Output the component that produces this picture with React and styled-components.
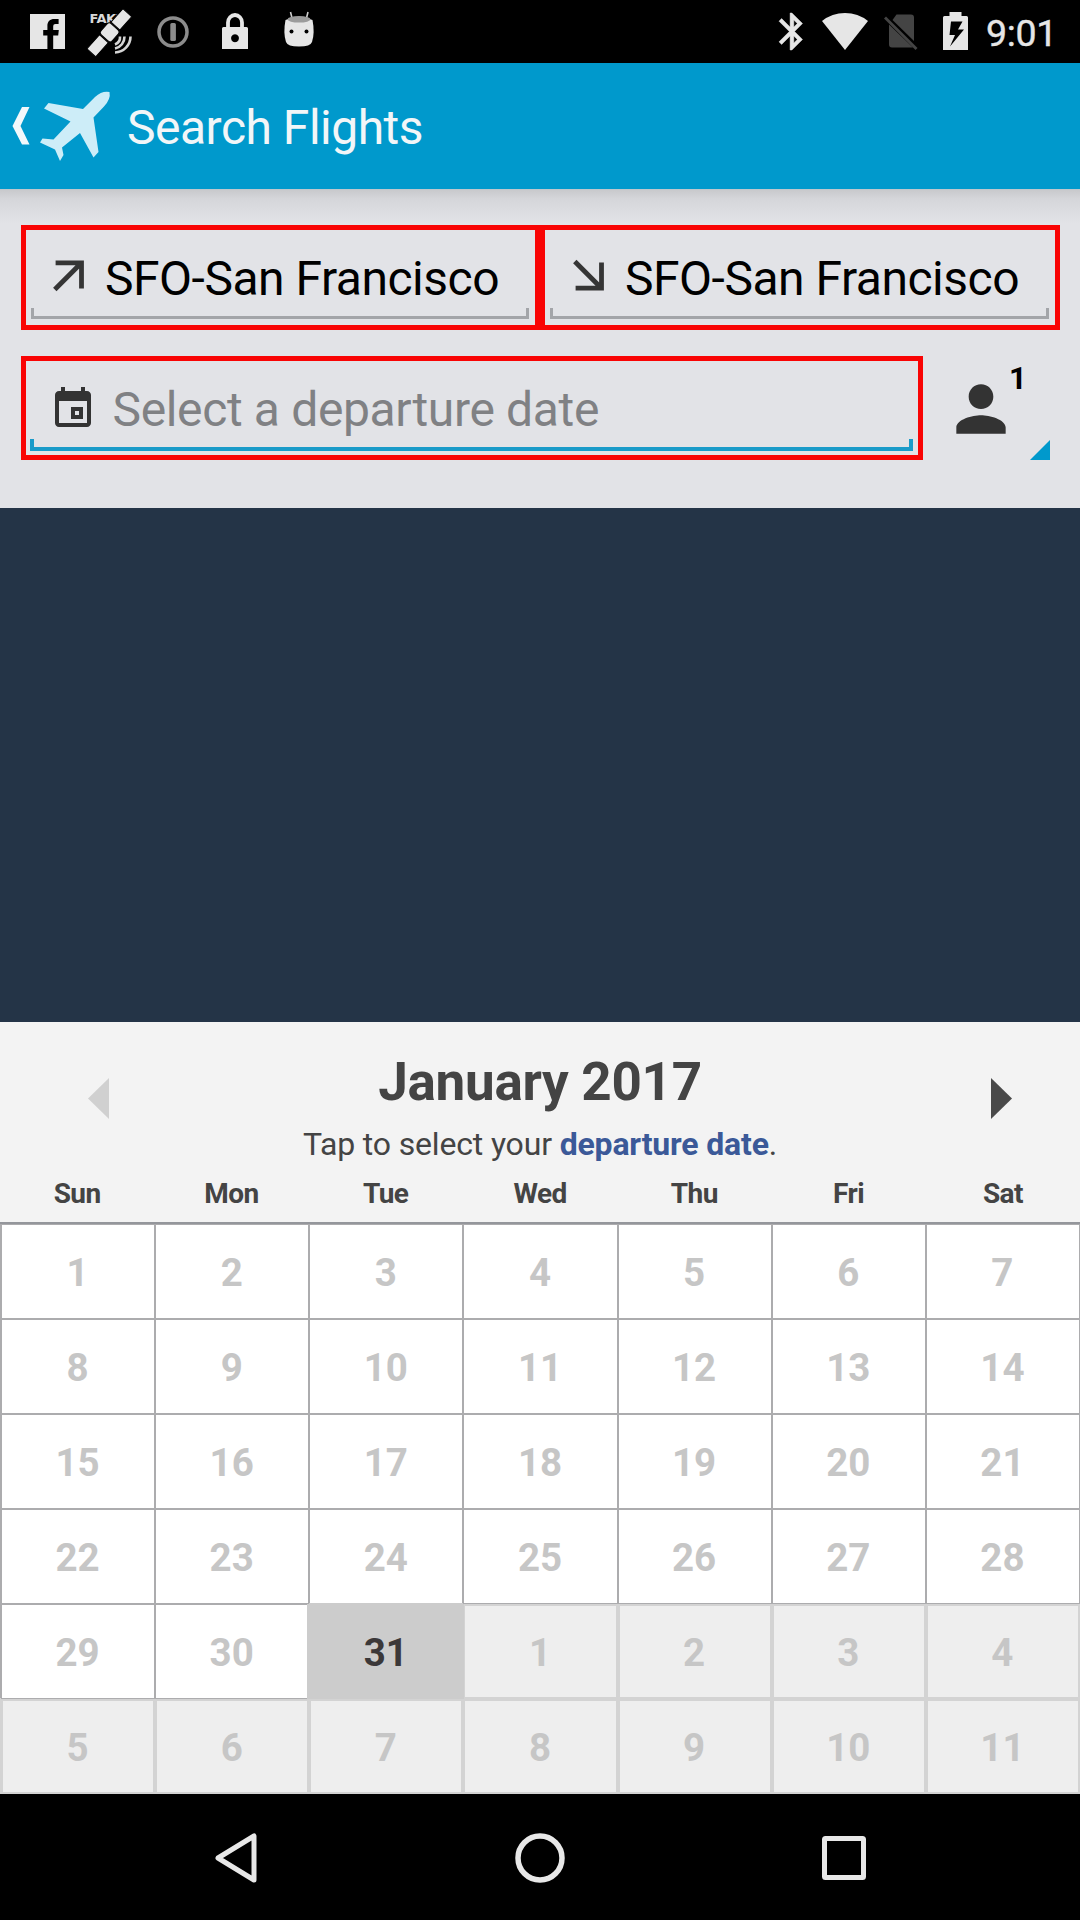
import React from "react";
import styled, { createGlobalStyle } from "styled-components";

const GlobalStyle = createGlobalStyle`
  * { box-sizing: border-box; }
  body { margin: 0; background: #000; font-family: Roboto, "Liberation Sans", sans-serif; }
  svg { display: block; flex: none; overflow: visible; }
`;

const Screen = styled.div`
  width: 1080px;
  height: 1920px;
  display: flex;
  flex-direction: column;
  overflow: hidden;
`;

const StatusBar = styled.div`
  height: 63px;
  flex: none;
  background: #000;
  display: flex;
  justify-content: space-between;
  padding: 0 23px 0 30px;
`;

const StatusGroup = styled.div`
  display: flex;
  height: 63px;
  align-items: flex-start;
`;

const StatusIcon = styled.div`
  margin-left: ${(p) => p.$gap || 0}px;
  padding-top: ${(p) => p.$top}px;
`;

const Clock = styled.span`
  margin-left: 18px;
  padding-top: 11px;
  font-size: 37.5px;
  line-height: 44px;
  letter-spacing: -0.3px;
  color: #e6e6e6;
  -webkit-text-stroke: 0.4px #e6e6e6;
`;

const ActionBar = styled.header`
  height: 126px;
  flex: none;
  background: #0099cc;
  display: flex;
  align-items: center;
  padding-left: 12px;
`;

const BarTitle = styled.h1`
  margin: 3px 0 0 17px;
  font-size: 48px;
  line-height: 56px;
  font-weight: 400;
  letter-spacing: -0.5px;
  color: #f2f6f8;
`;

const SearchPanel = styled.section`
  height: 319px;
  flex: none;
  padding: 36px 20px 0 21px;
  background: linear-gradient(#b9c6cd 0, #c9cacd 1.5px, #d5d6da 10px, #e2e3e7 34px);
`;

const FieldRow = styled.div`
  display: flex;
  margin-bottom: 26px;
`;

const Field = styled.div`
  width: ${(p) => p.$width}px;
  height: ${(p) => p.$height}px;
  flex: none;
  border: 5px solid #f90404;
  padding: ${(p) => p.$pad};
  display: flex;
`;

const FieldInner = styled.div`
  flex: 1;
  display: flex;
  align-items: flex-start;
  border: solid ${(p) => (p.$active ? "#1a9bc9" : "#a3a5a9")};
  border-width: 0 ${(p) => (p.$active ? "4px 4px" : "3px 3px")};
  border-image: linear-gradient(
      to top,
      ${(p) => (p.$active ? "#1a9bc9 12px, transparent 12px" : "#a3a5a9 11px, transparent 11px")}
    ) ${(p) => (p.$active ? 4 : 3)};
`;

const FieldIcon = styled.div`
  padding-top: ${(p) => p.$top}px;
  padding-left: ${(p) => p.$left}px;
`;

const FieldText = styled.span`
  padding-top: 21px;
  margin-left: ${(p) => p.$left}px;
  font-size: 48px;
  line-height: 56px;
  white-space: nowrap;
  letter-spacing: ${(p) => (p.$hint ? -0.35 : -0.48)}px;
  color: ${(p) => (p.$hint ? "#808184" : "#000")};
`;

const Travellers = styled.div`
  width: 126px;
  height: 104px;
  display: grid;
  grid-template-columns: 86px 1fr;
  grid-template-rows: 84px 20px;
  padding-left: 21px;
`;

const PersonSlot = styled.div`
  padding-top: 16px;
`;

const Count = styled.span`
  font-size: 31px;
  line-height: 36px;
  font-weight: 700;
  padding-top: 5px;
  margin-left: -21px;
`;

const Corner = styled.div`
  grid-column: 2;
  justify-self: end;
  width: 20px;
  height: 20px;
  background: #0099cc;
  clip-path: polygon(100% 0, 100% 100%, 0 100%);
`;

const Backdrop = styled.div`
  height: 514px;
  flex: none;
  background: #243447;
`;

const CalendarHeader = styled.div`
  height: 201px;
  flex: none;
  background: #f3f3f3;
  border-bottom: 1px solid #94969b;
  display: flex;
  flex-direction: column;
`;

const MonthRow = styled.div`
  height: 145px;
  display: grid;
  grid-template-columns: 109px 1fr 109px;
`;

const ArrowSlot = styled.div`
  display: flex;
  justify-content: ${(p) => (p.$end ? "flex-start" : "flex-end")};
  padding: 56px ${(p) => (p.$end ? 20 : 0)}px 0;
`;

const MonthInfo = styled.div`
  display: flex;
  flex-direction: column;
  align-items: center;
  padding-top: 29px;
  white-space: nowrap;
`;

const MonthTitle = styled.h2`
  margin: 0;
  font-size: 53px;
  line-height: 62px;
  font-weight: 700;
  letter-spacing: -0.3px;
  color: #444;
`;

const Prompt = styled.p`
  margin: 12px 0 0;
  font-size: 32px;
  line-height: 38px;
  letter-spacing: -0.17px;
  color: #444;
`;

const PromptTarget = styled.b`
  color: #3b5998;
`;

const Weekdays = styled.div`
  display: grid;
  grid-template-columns: repeat(7, 1fr);
`;

const Weekday = styled.span`
  text-align: center;
  padding-top: 10px;
  font-size: 28px;
  line-height: 34px;
  font-weight: 700;
  letter-spacing: -0.6px;
  color: #444;
`;

const Days = styled.div`
  height: 571px;
  flex: none;
  display: grid;
  grid-template-columns: repeat(7, 1fr);
  grid-template-rows: repeat(6, 1fr);
  padding: 1px 0 0 1px;
  background: linear-gradient(#94969b 1px, #acacae 1px, #acacae 475px, #d3d3d3 475px);
`;

const palette = {
  past: { bg: "#fff", line: "#acacae", ink: "#c6c6c6", width: 1 },
  today: { bg: "#cccccc", line: "#cccccc", ink: "#3b3839", width: 1 },
  next: { bg: "#eeeeee", line: "#d3d3d3", ink: "#c6c6c6", width: 2 },
};

const Day = styled.div`
  display: flex;
  align-items: center;
  justify-content: center;
  padding: 2px 1px 0 0;
  font-size: 38.5px;
  font-weight: 700;
  line-height: 44px;
  background: ${(p) => palette[p.$kind].bg};
  color: ${(p) => palette[p.$kind].ink};
  border: ${(p) => palette[p.$kind].width}px solid ${(p) => palette[p.$kind].line};
  ${(p) => p.$kind === "today" && "position: relative; box-shadow: -2px 0 #ccc, 1px 0 #ccc, 0 -1px #ccc;"}
`;

const NavBar = styled.nav`
  flex: 1;
  background: #000;
  display: flex;
  align-items: center;
  justify-content: space-between;
  padding: 1px 214px 0 215px;
`;

const Facebook = () => (
  <svg width="35" height="35" viewBox="0 0 35 35">
    <path fill="#e6e6e6" d="M0 0h35v35H23.200V21.500h5l.6-5.500h-5.600v-3.500c0-1.700.8-2.500 2.400-2.500h3V4.900h-4.200c-4.500 0-7 2.600-7 6.900V16h-4.200v5.500h4.200V35H0z" />
  </svg>
);

const FakeText = styled.text`
  font: 700 13px "DejaVu Sans", sans-serif;
  fill: #d8d8d8;
`;

const Satellite = () => (
  <svg width="44" height="43" viewBox="0 0 44 43">
    <FakeText x="1.500" y="12" textLength="35">FAKE</FakeText>
    <g transform="translate(22 21) rotate(-48)" fill="#e6e6e6" stroke="#000" strokeWidth="1">
      <rect x="-28" y="-6" width="19" height="12" rx="1" />
      <rect x="8" y="-6" width="18" height="12" rx="1" />
      <rect x="-8" y="-7.500" width="15" height="15" rx="3" />
    </g>
    <g fill="none" stroke="#d5d5d5" strokeWidth="2.600">
      <path d="M27 33.500a8 8 0 0 0 5-8" />
      <path d="M27 37.500a12 12 0 0 0 9.500-12" />
      <path d="M27 41.500a16 16 0 0 0 15.500-16" />
    </g>
  </svg>
);

const OnePassword = () => (
  <svg width="32" height="32" viewBox="0 0 32 32">
    <circle cx="16" cy="16" r="14" fill="none" stroke="#8c8c8c" strokeWidth="3.500" />
    <rect x="13.300" y="7" width="5.600" height="18" rx="1.500" fill="#8c8c8c" />
  </svg>
);

const Lock = () => (
  <svg width="26" height="36" viewBox="0 0 26 36">
    <path d="M6 16V9.500a7 7.500 0 0 1 14 0V16" fill="none" stroke="#e6e6e6" strokeWidth="3.800" />
    <path fillRule="evenodd" fill="#e6e6e6" d="M1.500 14h23q1.500 0 1.500 1.500V36H0V15.500Q0 14 1.500 14zM13 21.200a4 4 0 1 0 .01 0z" />
  </svg>
);

const AndroidHead = () => (
  <svg width="30" height="36" viewBox="0 0 30 36">
    <path d="M6.500 1l1.500 6M24 1l-1.500 6" stroke="#cfcfcf" strokeWidth="1.600" />
    <path fill="#e6e6e6" d="M1.500 9Q15 3 28.500 9Q31 22 28 31Q26.500 35.500 15 35.500T2 31Q-1 22 1.500 9z" />
    <ellipse cx="15" cy="8.300" rx="11.500" ry="3.300" fill="#9c9c9c" />
    <circle cx="7.500" cy="20.500" r="2" />
    <circle cx="22.500" cy="20.500" r="2" />
  </svg>
);

const Bluetooth = () => (
  <svg width="23.500" height="37" viewBox="5 2 12.700 20">
    <path fill="#e6e6e6" stroke="#e6e6e6" strokeWidth="0.250" d="M17.710 7.710L12 2h-1v7.590L6.410 5 5 6.410 10.590 12 5 17.590 6.410 19 11 14.410V22h1l5.710-5.710-4.300-4.290 4.300-4.290zM13 5.830l1.880 1.880L13 9.590V5.830zm1.880 10.460L13 18.170v-3.760l1.880 1.880z" />
  </svg>
);

const Wifi = () => (
  <svg width="46" height="37" viewBox="0 0 46 37">
    <path fill="#e6e6e6" d="M0 8Q10 0 23 0T46 8L23 37z" />
  </svg>
);

const NoSim = () => (
  <svg width="34" height="36" viewBox="0 0 34 36">
    <path fill="#444" d="M12.500 .5H27q3 0 3 3V27L8.500 6zM5 10.500L29 33.500H8q-3 0-3-3z" />
    <path d="M1 3.500L32.500 35" stroke="#444" strokeWidth="2.800" />
  </svg>
);

const Battery = () => (
  <svg width="25" height="38" viewBox="0 0 25 38">
    <path fillRule="evenodd" fill="#e6e6e6" d="M6.500 0h12v4H23.500q1.500 0 1.500 1.500V38H0V5.500Q0 4 1.500 4h5zM8 9.500L6.500 23h5.500L7 34.500 21 17.500H15L19.500 9.500z" />
  </svg>
);

const Chevron = () => (
  <svg width="18" height="38" viewBox="0 0 18 38">
    <path fill="#f2f8fb" d="M10 0h7.500L8.500 19l9 18.500H10L.5 19z" />
  </svg>
);

const PlaneBox = styled.div`
  margin-left: 10px;
`;

const Plane = () => (
  <svg width="70" height="70" viewBox="0 0 70 70">
    <path fill="#cdedf8" d="M69.500 1Q71 8 64 15.500L53.500 26.500 58.500 61 53.500 66.500 40 42 22 56.500 23.500 64 20 70 15 58.500 0 51.500 2.500 47.500 13.500 48.500 30.500 30.500 4 17.500 8.500 12 43 18 55 6Q62-.5 69.500 1z" />
  </svg>
);

const Depart = () => (
  <svg width="31" height="31" viewBox="0 0 31 31">
    <path fill="none" stroke="#353535" strokeWidth="4.800" d="M2.600 2.800H28.500V28.500M28 3.300L1.800 29.500" />
  </svg>
);

const Arrive = () => (
  <svg width="31" height="31" viewBox="0 0 31 31">
    <path fill="none" stroke="#353535" strokeWidth="4.800" d="M2.600 28.200H28.500V2.500M28 27.700L1.800 1.500" />
  </svg>
);

const CalendarIcon = () => (
  <svg width="48" height="48" viewBox="0 0 24 24">
    <path fill="#333" fillRule="evenodd" d="M16 1v2H8V1H6v2H5c-1.110 0-2 .9-2 2v14c0 1.100.89 2 2 2h14c1.100 0 2-.9 2-2V5c0-1.100-.9-2-2-2h-1V1zM5 8h14v11H5zM11 11v6h6v-6zM13 13h2v2h-2z" />
  </svg>
);

const Person = () => (
  <svg width="74" height="74" viewBox="0 0 24 24">
    <path fill="#333" d="M12 12c2.210 0 4-1.790 4-4s-1.790-4-4-4-4 1.790-4 4 1.790 4 4 4zm0 2c-2.670 0-8 1.340-8 4v2h16v-2c0-2.660-5.330-4-8-4z" />
  </svg>
);

const MonthArrow = ({ next }) => (
  <svg width="21" height="41" viewBox="0 0 21 41">
    {next ? <path fill="#4a4a4a" d="M0 0L21 20.500 0 41z" /> : <path fill="#d0d0d0" d="M21 0v41L0 20.500z" />}
  </svg>
);

const weekdays = ["Sun", "Mon", "Tue", "Wed", "Thu", "Fri", "Sat"];
const days = [
  ...Array.from({ length: 30 }, (_, i) => ({ n: i + 1, kind: "past" })),
  { n: 31, kind: "today" },
  ...Array.from({ length: 11 }, (_, i) => ({ n: i + 1, kind: "next" })),
];

export default function App() {
  return (
    <Screen>
      <GlobalStyle />
      <StatusBar>
        <StatusGroup>
          <StatusIcon $top={14}><Facebook /></StatusIcon>
          <StatusIcon $top={11} $gap={23}><Satellite /></StatusIcon>
          <StatusIcon $top={16} $gap={25}><OnePassword /></StatusIcon>
          <StatusIcon $top={13} $gap={33}><Lock /></StatusIcon>
          <StatusIcon $top={11} $gap={36}><AndroidHead /></StatusIcon>
        </StatusGroup>
        <StatusGroup>
          <StatusIcon $top={13}><Bluetooth /></StatusIcon>
          <StatusIcon $top={12.5} $gap={19}><Wifi /></StatusIcon>
          <StatusIcon $top={14} $gap={16}><NoSim /></StatusIcon>
          <StatusIcon $top={12} $gap={25}><Battery /></StatusIcon>
          <Clock>9:01</Clock>
        </StatusGroup>
      </StatusBar>

      <ActionBar>
        <Chevron />
        <PlaneBox><Plane /></PlaneBox>
        <BarTitle>Search Flights</BarTitle>
      </ActionBar>

      <SearchPanel>
        <FieldRow>
          <Field $width={519} $height={105} $pad="0 6px 6px 5px">
            <FieldInner>
              <FieldIcon $top={30} $left={19}><Depart /></FieldIcon>
              <FieldText $left={21}>SFO-San Francisco</FieldText>
            </FieldInner>
          </Field>
          <Field $width={520} $height={105} $pad="0 6px 6px 5px">
            <FieldInner>
              <FieldIcon $top={30} $left={20}><Arrive /></FieldIcon>
              <FieldText $left={21}>SFO-San Francisco</FieldText>
            </FieldInner>
          </Field>
        </FieldRow>
        <FieldRow>
          <Field $width={902} $height={104} $pad="0 5px 4px 4px">
            <FieldInner $active>
              <FieldIcon $top={24} $left={15}><CalendarIcon /></FieldIcon>
              <FieldText $left={15.5} $hint>Select a departure date</FieldText>
            </FieldInner>
          </Field>
          <Travellers>
            <PersonSlot><Person /></PersonSlot>
            <Count>1</Count>
            <Corner />
          </Travellers>
        </FieldRow>
      </SearchPanel>

      <Backdrop />

      <CalendarHeader>
        <MonthRow>
          <ArrowSlot><MonthArrow /></ArrowSlot>
          <MonthInfo>
            <MonthTitle>January 2017</MonthTitle>
            <Prompt>
              Tap to select your <PromptTarget>departure date</PromptTarget>.
            </Prompt>
          </MonthInfo>
          <ArrowSlot $end><MonthArrow next /></ArrowSlot>
        </MonthRow>
        <Weekdays>
          {weekdays.map((d) => <Weekday key={d}>{d}</Weekday>)}
        </Weekdays>
      </CalendarHeader>

      <Days>
        {days.map((d, i) => <Day key={i} $kind={d.kind}>{d.n}</Day>)}
      </Days>

      <NavBar>
        <svg width="42" height="50" viewBox="0 0 42 50">
          <path d="M39 3v44L3 25z" fill="none" stroke="#e8e8e8" strokeWidth="5" strokeLinejoin="round" />
        </svg>
        <svg width="50" height="50" viewBox="0 0 50 50">
          <circle cx="25" cy="25" r="22" fill="none" stroke="#e8e8e8" strokeWidth="5.500" />
        </svg>
        <svg width="44" height="44" viewBox="0 0 44 44">
          <rect x="2.500" y="2.500" width="39" height="39" rx="1" fill="none" stroke="#e8e8e8" strokeWidth="5" strokeLinejoin="round" />
        </svg>
      </NavBar>
    </Screen>
  );
}
